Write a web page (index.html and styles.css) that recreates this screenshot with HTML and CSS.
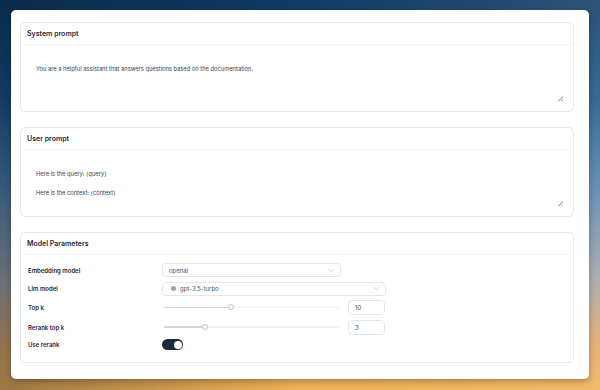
FILE: index.html
```html
<!DOCTYPE html>
<html lang="en">
<head>
  <meta charset="UTF-8">
  <title>Prompt settings</title>
  <link rel="stylesheet" href="styles.css">
</head>
<body>

  <div class="card">

    <div class="panel">
      <div class="panel-head">System prompt</div>
      <div class="panel-body">
        <textarea class="prompt prompt-sys">You are a helpful assistant that answers questions based on the documentation.</textarea>
      </div>
    </div>

    <div class="panel">
      <div class="panel-head">User prompt</div>
      <div class="panel-body">
        <textarea class="prompt prompt-user">Here is the query: {query}

Here is the context: {context}</textarea>
      </div>
    </div>

    <div class="panel">
      <div class="panel-head">Model Parameters</div>
      <div class="params">
        <div class="param-label">Embedding model</div>
        <div class="select select-sm">
          <span>openai</span>
          <svg class="chev" viewBox="0 0 10 6" width="7" height="5"><path d="M1 1l4 4 4-4" fill="none" stroke="#b8bfc9" stroke-width="1"/></svg>
        </div>

        <div class="param-label">Llm model</div>
        <div class="select">
          <span class="dot"></span>
          <span>gpt-3.5-turbo</span>
          <svg class="chev" viewBox="0 0 10 6" width="7" height="5"><path d="M1 1l4 4 4-4" fill="none" stroke="#b8bfc9" stroke-width="1"/></svg>
        </div>

        <div class="param-label">Top k</div>
        <div class="range-row">
          <input type="range" class="slider" min="1" max="25" value="10" style="--fill: 37%">
          <input type="text" class="num" value="10">
        </div>

        <div class="param-label">Rerank top k</div>
        <div class="range-row">
          <input type="range" class="slider" min="1" max="10" value="3" style="--fill: 22%">
          <input type="text" class="num" value="3">
        </div>

        <div class="param-label">Use rerank</div>
        <div class="toggle-wrap">
          <span class="toggle on"><span class="knob"></span></span>
        </div>
      </div>
    </div>

  </div>

</body>
</html>
```

FILE: styles.css
```css
html, body {
  height: 100%;
}
body {
  margin: 0;
  padding: 10px 11px 11px 11px;
  box-sizing: border-box;
  font-family: Inter, "Noto Sans", sans-serif;
  color: #1f2937;
  background:
    linear-gradient(90deg, rgba(0, 12, 30, 0.35), rgba(0, 12, 30, 0) 50%, rgba(255, 255, 255, 0.12)),
    linear-gradient(180deg, #103a64 0%, #1a5585 25%, #5a85ad 50%, #a3a4a6 72%, #e0a868 88%, #eeb055 100%);
  overflow: hidden;
}
.card {
  height: 100%;
  box-sizing: border-box;
  background: #fff;
  border-radius: 5px;
  box-shadow: 0 2px 6px rgba(0, 0, 0, 0.3);
  padding: 12px 15px 16px 9px;
  display: flex;
  flex-direction: column;
  gap: 15px;
}
.panel {
  border: 1px solid #e6e8ec;
  border-radius: 5px;
  background: #fff;
}
.panel-head {
  height: 21px;
  line-height: 21px;
  padding: 0 6px;
  font-size: 7px;
  font-weight: 600;
  color: #1f2937;
  border-bottom: 1px solid #f3f4f6;
}
.panel-body {
  padding: 8px;
}
.prompt {
  display: block;
  width: 100%;
  box-sizing: border-box;
  border: none;
  outline: none;
  resize: vertical;
  padding: 11px 7px;
  font-family: Inter, "Noto Sans", sans-serif;
  font-size: 5.75px;
  line-height: 9.5px;
  color: #374151;
  background: #fff;
}
.prompt::-webkit-resizer {
  background: linear-gradient(135deg, transparent 45%, #b8b8b8 45%, #b8b8b8 62%, transparent 62%, transparent 72%, #b8b8b8 72%, #b8b8b8 90%, transparent 90%) no-repeat right 2px bottom 2px / 5px 5px;
}
.prompt-sys {
  height: 50px;
}
.prompt-user {
  height: 50px;
}
.params {
  display: grid;
  grid-template-columns: 135px 1fr;
  row-gap: 4.5px;
  align-items: center;
  padding: 8px 8px 12px 6px;
}
.param-label {
  font-size: 6px;
  font-weight: 600;
  color: #1f2937;
  padding-left: 1px;
}
.select {
  width: 224px;
  height: 14px;
  box-sizing: border-box;
  border: 1px solid #e2e6ec;
  border-radius: 4px;
  display: flex;
  align-items: center;
  gap: 4px;
  padding: 0 5px 0 6px;
  font-size: 6px;
  color: #4b5563;
}
.select-sm {
  width: 179px;
}
.chev {
  margin-left: auto;
}
.dot {
  width: 5px;
  height: 5px;
  border-radius: 50%;
  background: #9ca3af;
  margin-left: 2px;
}
.range-row {
  width: 224px;
  display: flex;
  align-items: center;
  gap: 8px;
}
.slider {
  -webkit-appearance: none;
  appearance: none;
  margin: 0 0 0 2px;
  width: 176px;
  height: 6px;
  background: transparent;
}
.slider::-webkit-slider-runnable-track {
  height: 1.5px;
  border-radius: 1px;
  background: linear-gradient(90deg, #cdd5e0 var(--fill), #eef1f5 var(--fill));
}
.slider::-webkit-slider-thumb {
  -webkit-appearance: none;
  width: 6px;
  height: 6px;
  margin-top: -2.5px;
  border-radius: 50%;
  background: #fff;
  border: 1px solid #b8c2d0;
  box-sizing: border-box;
}
.num {
  width: 37px;
  height: 15px;
  box-sizing: border-box;
  border: 1px solid #e2e6ec;
  border-radius: 4px;
  padding: 0 6px;
  font-family: Inter, "Noto Sans", sans-serif;
  font-size: 6px;
  color: #374151;
  outline: none;
}
.toggle-wrap {
  display: flex;
}
.toggle {
  width: 21px;
  height: 11px;
  border-radius: 6px;
  background: #e5e7eb;
  position: relative;
}
.toggle.on {
  background: #1e293b;
}
.knob {
  position: absolute;
  top: 1.5px;
  left: 1.5px;
  width: 8px;
  height: 8px;
  border-radius: 50%;
  background: #fff;
}
.toggle.on .knob {
  left: 11.5px;
}
```
